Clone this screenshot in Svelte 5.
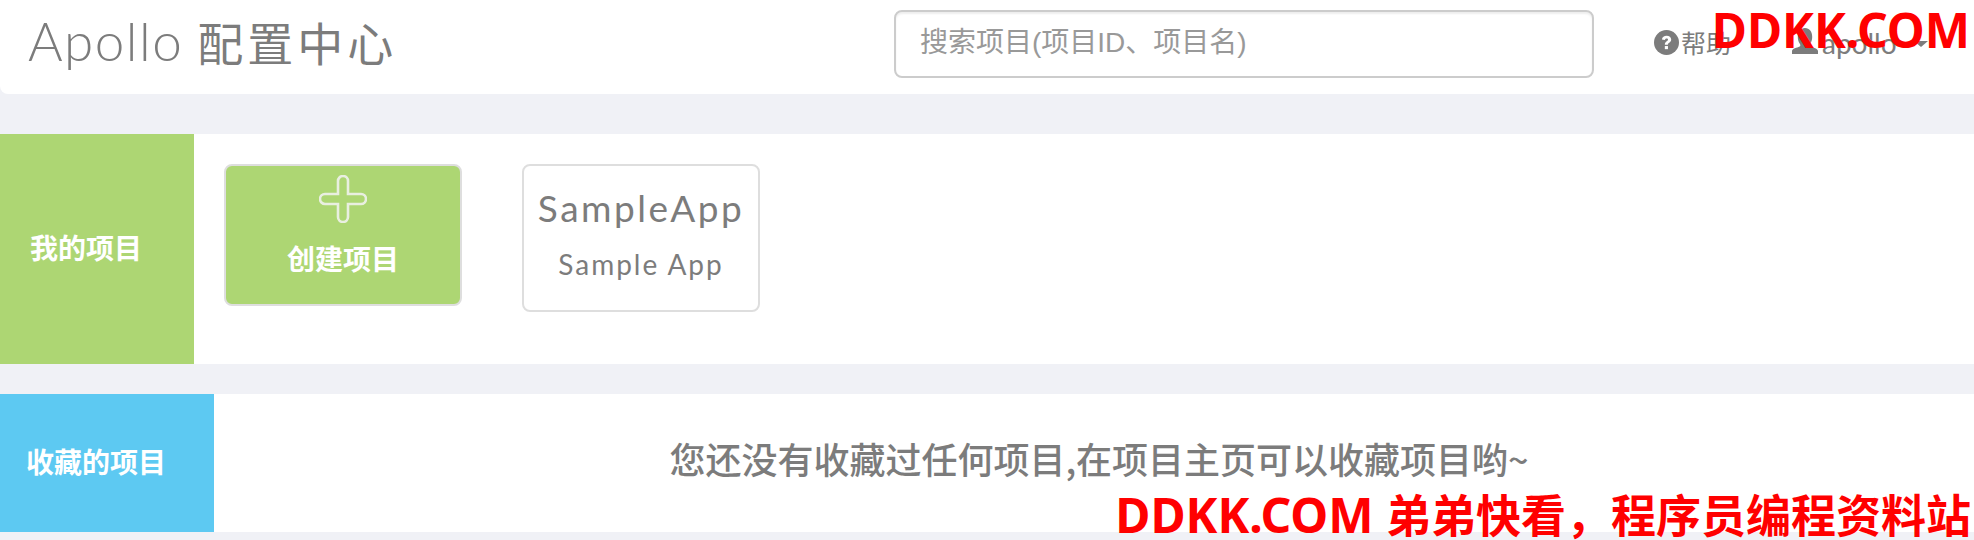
<script>
  const favoritesEmpty = "您还没有收藏过任何项目,在项目主页可以收藏项目哟~";
</script>

<div class="page">
  <header class="nav">
    <div class="brand">Apollo <span class="cn">配置中心</span></div>
    <div class="search">搜索项目(项目ID、项目名)</div>
    <div class="links">
      <span class="link help">
        <svg width="25" height="25" viewBox="0 0 24 24">
          <circle cx="12" cy="12" r="12" fill="#7c7c7c" />
          <path d="M7.6 9.2C7.9 6.8 9.7 5.6 12.1 5.6c2.5 0 4.4 1.4 4.4 3.6 0 1.7-1 2.5-2.1 3.2-.8.5-1.1.8-1.1 1.7h-2.9c0-1.800.6-2.600 1.800-3.400.8-.5 1.300-.9 1.300-1.400 0-.7-.6-1.100-1.400-1.100-.9 0-1.500.5-1.700 1.500z" fill="#fff" />
          <rect x="10.4" y="15.4" width="3" height="3" fill="#fff" />
        </svg>
        帮助
      </span>
      <span class="link user">
        <svg width="26" height="26" viewBox="0 0 26 26">
          <path d="M0 26v-3c0-2.200 5-3.200 7.600-4.400 1-.5.9-1.900.2-2.900C6.400 13.800 5.800 11.500 5.800 8.800 5.800 3.800 8.500 0 13 0s7.200 3.800 7.200 8.800c0 2.700-.6 5-2 6.900-.7 1-.8 2.400.2 2.900C21 19.800 26 20.800 26 23v3z" fill="#7c7c7c" />
        </svg>
        <span class="uname">apollo</span>
        <i class="caret"></i>
      </span>
    </div>
  </header>

  <section class="band mine">
    <div class="side green">我的项目</div>
    <div class="cards">
      <div class="card create">
        <svg class="plus" width="48" height="48" viewBox="0 0 48 48">
          <path d="M19 6a5 5 0 0 1 10 0v13h13a5 5 0 0 1 0 10H29v13a5 5 0 0 1-10 0V29H6a5 5 0 0 1 0-10h13z" fill="none" stroke="#e9efe0" stroke-width="2.600" />
        </svg>
        <div class="create-label">创建项目</div>
      </div>
      <div class="card app">
        <div class="app-id">SampleApp</div>
        <div class="app-name">Sample App</div>
      </div>
    </div>
  </section>

  <section class="band favorites">
    <div class="side blue">收藏的项目</div>
    <div class="empty">{favoritesEmpty}</div>
  </section>

  <div class="mark mark-top">DDKK.COM</div>
  <div class="mark mark-bottom">DDKK.COM <span class="mark-cn">弟弟快看，程序员编程资料站</span></div>
</div>

<style>
  :global(body) {
    margin: 0;
  }

  .page {
    position: relative;
    height: 540px;
    overflow: hidden;
    background: #f0f1f6;
    color: #7c7c7c;
    font-family: "Lato", "Noto Sans CJK SC", sans-serif;
  }

  .nav {
    display: flex;
    align-items: center;
    box-sizing: border-box;
    height: 94px;
    padding-bottom: 6px;
    background: #fff;
    border-bottom-left-radius: 8px;
  }

  .brand {
    width: 894px;
    box-sizing: border-box;
    padding: 0 0 6px 28px;
    font-size: 53px;
    letter-spacing: 1.5px;
    white-space: nowrap;
    font-weight: 300;
  }

  .brand .cn {
    margin-left: -2px;
    font-size: 46px;
    font-weight: 400;
    letter-spacing: 4px;
  }

  .search {
    box-sizing: border-box;
    width: 700px;
    height: 68px;
    padding-left: 24px;
    line-height: 62px;
    border: 2px solid #ccc;
    border-radius: 8px;
    box-shadow: inset 0 2px 2px rgb(0 0 0 / 0.07);
    color: #999;
    font-size: 28px;
    font-family: "Liberation Sans", "Noto Sans CJK SC", sans-serif;
  }

  .links {
    display: flex;
    align-items: center;
    padding-left: 60px;
    font-size: 25px;
  }

  .link {
    display: flex;
    align-items: center;
  }

  .help {
    gap: 2px;
    width: 138px;
    margin-top: -4px;
  }

  .user {
    gap: 4px;
    margin-top: -6px;
  }

  .uname {
    font-size: 28px;
    margin-top: 4px;
  }

  .caret {
    margin: 6px 0 0 13px;
    border-top: 6px solid #7c7c7c;
    border-left: 7px solid transparent;
    border-right: 7px solid transparent;
  }

  .band {
    display: flex;
    background: #fff;
  }

  .mine {
    height: 230px;
    margin-top: 40px;
  }

  .favorites {
    height: 138px;
    margin-top: 30px;
  }

  .side {
    display: flex;
    align-items: center;
    justify-content: center;
    box-sizing: border-box;
    flex-shrink: 0;
    padding-right: 22px;
    color: #fff;
    font-size: 28px;
    font-weight: 700;
    font-family: "Noto Sans CJK SC", sans-serif;
  }

  .green {
    width: 194px;
    background: #add673;
    padding-bottom: 4px;
  }

  .blue {
    width: 214px;
    background: #5dc9f2;
    padding-bottom: 4px;
  }

  .cards {
    display: flex;
    align-items: flex-start;
    gap: 60px;
    padding: 30px 0 0 30px;
  }

  .card {
    box-sizing: border-box;
    width: 238px;
    border: 2px solid #dedede;
    border-radius: 8px;
    text-align: center;
  }

  .create {
    height: 142px;
    background: #add673;
    color: #fff;
  }

  .plus {
    display: block;
    margin: 9px auto 0;
  }

  .create-label {
    margin-top: 15px;
    font-size: 28px;
    font-weight: 700;
    line-height: 40px;
    font-family: "Noto Sans CJK SC", sans-serif;
  }

  .app {
    height: 148px;
  }

  .app-id {
    margin-top: 19px;
    font-size: 37px;
    line-height: 46px;
    letter-spacing: 2.5px;
  }

  .app-name {
    margin-top: 15px;
    font-size: 28px;
    line-height: 36px;
    letter-spacing: 2px;
  }

  .empty {
    flex: 1;
    padding: 40px 0 0 10px;
    text-align: center;
    font-size: 36px;
    line-height: 48px;
    font-weight: 500;
    font-family: "Noto Sans CJK SC", sans-serif;
  }

  .mark {
    position: absolute;
    color: #f00;
    font-family: "Noto Sans", "Noto Sans CJK SC", sans-serif;
    font-weight: 700;
    white-space: nowrap;
  }

  .mark-top {
    top: 0;
    right: 4px;
    font-size: 48px;
    line-height: 60px;
  }

  .mark-bottom {
    bottom: -4px;
    right: 3px;
    font-size: 48px;
    line-height: 56px;
  }

  .mark-cn {
    font-size: 45px;
  }
</style>
